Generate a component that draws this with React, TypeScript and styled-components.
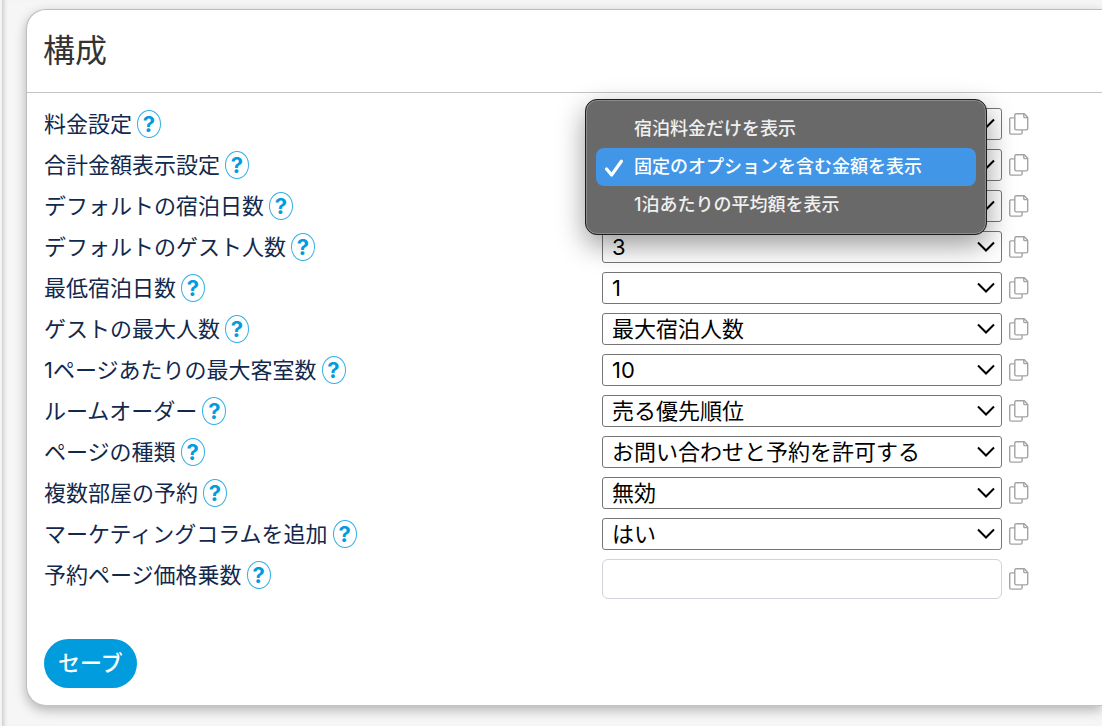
import React, { useState } from "react";
import styled, { createGlobalStyle } from "styled-components";

const GlobalStyle = createGlobalStyle`
  *, *::before, *::after { box-sizing: border-box; }
  body {
    margin: 0;
    background: #f4f4f4;
    color: #12284c;
    font-family: Inter, "Noto Sans CJK JP", sans-serif;
    font-size: 22px;
    line-height: 32px;
    overflow-x: hidden;
  }
`;

const Page = styled.main`
  min-height: 100vh;
  margin-left: 2px;
  padding: 9px 0 20px 24px;
  background: #f6f6f6;
  box-shadow: inset 5px 0 5px -4px rgba(0, 0, 0, 0.24);
`;

const Card = styled.section`
  border: 1px solid #bdbdbd;
  border-right: none;
  border-bottom-color: #c4c4c4;
  border-radius: 20px 0 0 20px;
  background: #fff;
  box-shadow: 0 4px 12px rgba(0, 0, 0, 0.28);
`;

const CardHeader = styled.header`
  padding: 16px;
  border-bottom: 1px solid #c4c4c4;
`;

const Title = styled.h1`
  margin: 0;
  color: #333;
  font-size: 32px;
  font-weight: 400;
  line-height: 50px;
`;

const Form = styled.form`
  padding: 15px 73px 17px 17px;
`;

const Rows = styled.div`
  display: grid;
  gap: 9px;
`;

const Row = styled.div`
  display: grid;
  grid-template-columns: minmax(0, 1fr) 400px 20px;
  column-gap: 7px;
  align-items: center;
`;

const LabelCell = styled.div`
  display: flex;
  align-items: center;
  align-self: start;
  gap: 5px;
  height: 32px;
`;

const HelpButton = styled.button`
  width: 24px;
  height: 28px;
  padding: 0;
  border: 1px solid #33b0e5;
  border-radius: 50%;
  background: #fff;
  color: #019cde;
  font: 700 22px/24px Inter, sans-serif;
`;

const Field = styled.div`
  position: relative;
`;

const Select = styled.select`
  display: block;
  width: 100%;
  height: 32px;
  padding: 0 32px 0 9px;
  appearance: none;
  border: 1px solid #767676;
  border-radius: 3px;
  background: transparent;
  color: #000;
  font: inherit;
  line-height: 30px;
`;

const Chevron = styled.svg`
  position: absolute;
  top: 10px;
  right: 6px;
  width: 19px;
  height: 12px;
  pointer-events: none;
`;

const TextInput = styled.input`
  display: block;
  width: 100%;
  height: 40px;
  padding: 0 9px;
  border: 1px solid #ced4da;
  border-radius: 6px;
  background: #fff;
  font: inherit;
`;

const CopyButton = styled.button`
  display: block;
  width: 20px;
  height: 22px;
  padding: 0;
  border: none;
  background: none;
  color: #a3a3a3;

  svg { display: block; }
`;

const Menu = styled.ul`
  position: absolute;
  z-index: 2;
  top: -50px;
  left: -17px;
  right: 15px;
  margin: 0;
  padding: 10px;
  list-style: none;
  border: 1px solid #1d1d1d;
  border-radius: 12px;
  background: #696969;
  box-shadow: inset 0 0 0 1px #8b8b8b, 0 10px 28px rgba(0, 0, 0, 0.4);
`;

const MenuItem = styled.li<{ $selected: boolean }>`
  display: flex;
  align-items: center;
  gap: 8px;
  height: 38px;
  padding-left: 8px;
  border-radius: 8px;
  background: ${(p) => (p.$selected ? "#4196e8" : "transparent")};
  color: ${(p) => (p.$selected ? "#fff" : "#f0f0f0")};
  font-size: 18px;
  font-weight: 500;
`;

const MarkSlot = styled.span`
  display: flex;
  width: 22px;
`;

const SaveButton = styled.button`
  display: block;
  height: 49px;
  margin-top: 40px;
  padding: 0 14px;
  border: none;
  border-radius: 25px;
  background: #019cde;
  color: #fff;
  font: 500 22px/49px Inter, "Noto Sans CJK JP", sans-serif;
`;

const CopyIcon = () => (
  <svg width="20" height="22" viewBox="0 0 20 22" fill="none" stroke="currentColor" strokeWidth="1.4" strokeLinejoin="round" aria-hidden="true">
    <path d="M5.500 4.900H2.100Q.7 4.900.7 6.300v13.400q0 1.400 1.400 1.400h9.600q1.400 0 1.400-1.400v-2.600" />
    <path d="M7.200.8h8.100l3.400 3.400v11.300q0 1.400-1.400 1.400H7.200q-1.400 0-1.400-1.400V2.200Q5.800.8 7.200.8z" />
    <path d="M14.800.9v2.800q0 .9.9.9h2.900" />
  </svg>
);

const CheckIcon = () => (
  <svg width="20" height="20" viewBox="0 0 20 20" fill="none" stroke="#fff" strokeWidth="3.2" strokeLinecap="round" strokeLinejoin="round" aria-hidden="true">
    <path d="M2.600 12 7.600 18 17.400 4.200" />
  </svg>
);

interface Setting {
  id: string;
  label: string;
  options?: string[];
  value: string;
  open?: boolean;
}

const totals = ["宿泊料金だけを表示", "固定のオプションを含む金額を表示", "1泊あたりの平均額を表示"];

const settings: Setting[] = [
  { id: "rates", label: "料金設定", options: [""], value: "" },
  { id: "total", label: "合計金額表示設定", options: totals, value: totals[1], open: true },
  { id: "nights", label: "デフォルトの宿泊日数", options: [""], value: "" },
  { id: "guests", label: "デフォルトのゲスト人数", options: ["3"], value: "3" },
  { id: "min-nights", label: "最低宿泊日数", options: ["1"], value: "1" },
  { id: "max-guests", label: "ゲストの最大人数", options: ["最大宿泊人数"], value: "最大宿泊人数" },
  { id: "per-page", label: "1ページあたりの最大客室数", options: ["10"], value: "10" },
  { id: "order", label: "ルームオーダー", options: ["売る優先順位"], value: "売る優先順位" },
  { id: "page-type", label: "ページの種類", options: ["お問い合わせと予約を許可する"], value: "お問い合わせと予約を許可する" },
  { id: "multi-room", label: "複数部屋の予約", options: ["無効"], value: "無効" },
  { id: "marketing", label: "マーケティングコラムを追加", options: ["はい"], value: "はい" },
  { id: "multiplier", label: "予約ページ価格乗数", value: "" },
];

function SettingRow({ setting }: { setting: Setting }) {
  const [value, setValue] = useState(setting.value);
  const [open, setOpen] = useState(Boolean(setting.open));

  return (
    <Row>
      <LabelCell>
        <label htmlFor={setting.id}>{setting.label}</label>
        <HelpButton type="button">?</HelpButton>
      </LabelCell>
      <Field>
        {setting.options ? (
          <>
            <Select id={setting.id} value={value} onChange={(e) => setValue(e.target.value)}>
              {setting.options.map((o) => (
                <option key={o} value={o}>{o}</option>
              ))}
            </Select>
            <Chevron viewBox="0 0 19 12" fill="none" stroke="#000" strokeWidth="2" aria-hidden="true">
              <path d="M1 1.500 9 9.500 17 1.500" />
            </Chevron>
          </>
        ) : (
          <TextInput id={setting.id} type="text" value={value} onChange={(e) => setValue(e.target.value)} />
        )}
        {open && setting.options && (
          <Menu role="listbox">
            {setting.options.map((o) => (
              <MenuItem
                key={o}
                role="option"
                aria-selected={o === value}
                $selected={o === value}
                onClick={() => {
                  setValue(o);
                  setOpen(false);
                }}
              >
                <MarkSlot>{o === value && <CheckIcon />}</MarkSlot>
                {o}
              </MenuItem>
            ))}
          </Menu>
        )}
      </Field>
      <CopyButton type="button" aria-label="コピー">
        <CopyIcon />
      </CopyButton>
    </Row>
  );
}

export default function App() {
  return (
    <>
      <GlobalStyle />
      <Page>
        <Card>
          <CardHeader>
            <Title>構成</Title>
          </CardHeader>
          <Form onSubmit={(e) => e.preventDefault()}>
            <Rows>
              {settings.map((s) => (
                <SettingRow key={s.id} setting={s} />
              ))}
            </Rows>
            <SaveButton type="submit">セーブ</SaveButton>
          </Form>
        </Card>
      </Page>
    </>
  );
}
